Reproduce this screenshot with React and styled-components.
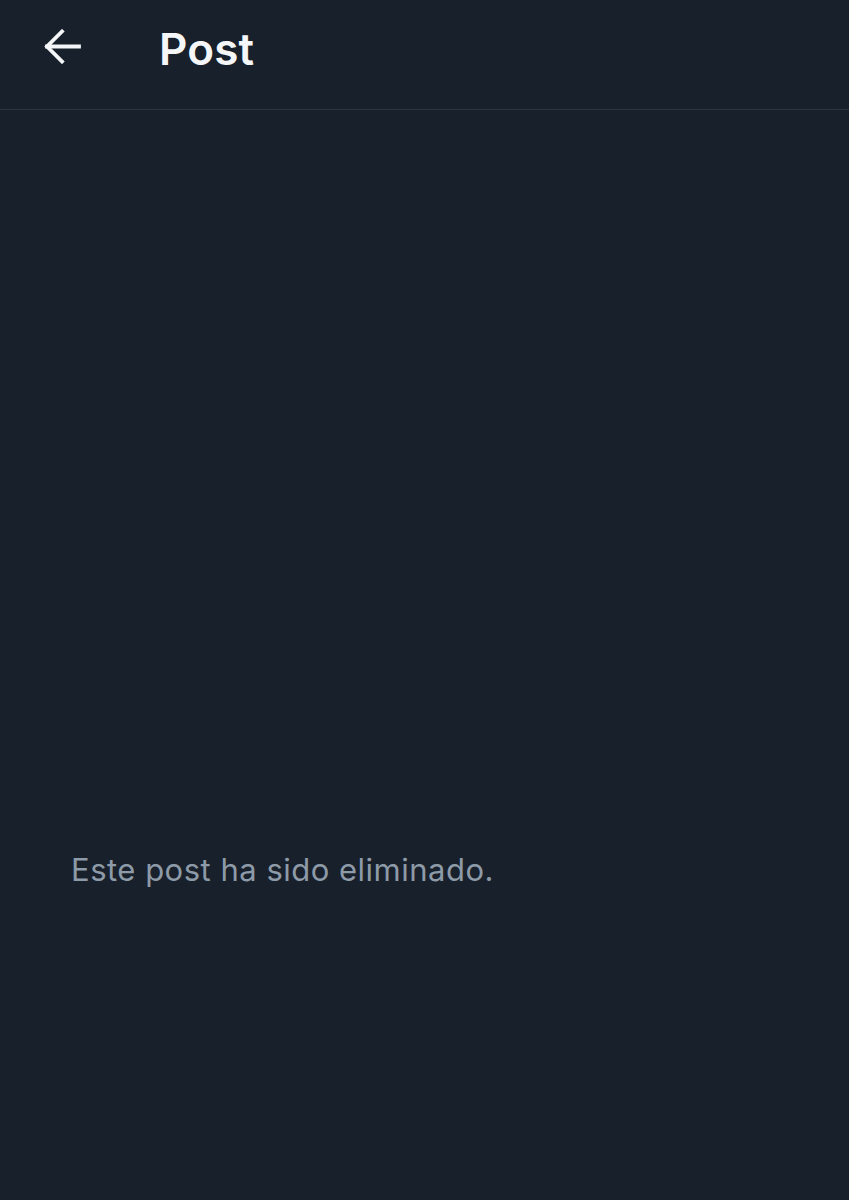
import React from 'react';
import styled, {createGlobalStyle} from 'styled-components';

const GlobalStyle = createGlobalStyle`
html, body {
    margin: 0;
    padding: 0;
    background: #18202b;
}
body {
    font-family: Inter, "Noto Sans", sans-serif;
}
`

const Page = styled.div`
display: flex;
flex-direction: column;
width: 849px;
min-height: 1200px;
background: #18202b;
`

const Header = styled.header`
display: flex;
align-items: center;
height: 110px;
padding: 0 0 0 44px;
border-bottom: 1.5px solid #2a3440;
box-sizing: border-box;
`

const BackButton = styled.button`
display: flex;
align-items: center;
justify-content: center;
width: 37px;
height: 36px;
padding: 0;
margin-top: -17px;
border: none;
background: none;
color: #f4f6f8;
cursor: pointer;
`

const Title = styled.h1`
margin: -12px 0 0 78px;
font-size: 44px;
font-weight: 600;
color: #f4f6f8;
letter-spacing: 0.2px;
`

const Body = styled.main`
flex: 1;
padding: 741px 0 0 71px;
`

const Notice = styled.p`
margin: 0;
font-size: 31px;
font-weight: 400;
letter-spacing: 0.5px;
color: #8d9aa7;
`

const ArrowLeft = () => (
    <svg width="37" height="35" viewBox="0 0 37 35" fill="none" stroke="currentColor" strokeWidth="3.8" strokeLinecap="square">
        <path d="M3 17.5 H35"/>
        <path d="M18 2.5 L3 17.5 L18 32.5"/>
    </svg>
)

const App = () => (
    <>
        <GlobalStyle/>
        <Page>
            <Header>
                <BackButton aria-label="Volver">
                    <ArrowLeft/>
                </BackButton>
                <Title>Post</Title>
            </Header>
            <Body>
                <Notice>Este post ha sido eliminado.</Notice>
            </Body>
        </Page>
    </>
);

export default App;
